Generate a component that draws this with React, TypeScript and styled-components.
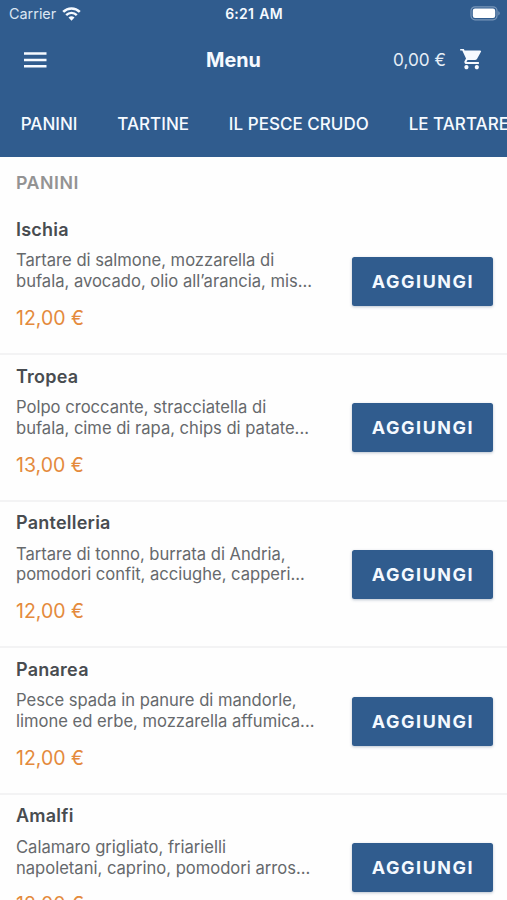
import React from "react";
import styled, { createGlobalStyle } from "styled-components";

const GlobalStyle = createGlobalStyle`
  * { box-sizing: border-box; }
  html, body { margin: 0; padding: 0; overflow: hidden; }
  body { font-family: Inter, "Liberation Sans", sans-serif; background: #fefefe; }
`;

const Screen = styled.main`
  width: 507px;
  height: 900px;
  overflow: hidden;
  display: flex;
  flex-direction: column;
  background: #fefefe;
`;

const Header = styled.header`
  flex: none;
  height: 157px;
  background: #305c8e;
  color: #f6faff;
  display: flex;
  flex-direction: column;
`;

const StatusBar = styled.div`
  height: 27px;
  display: grid;
  grid-template-columns: 1fr auto 1fr;
  align-items: center;
  padding: 0 7px 0 8px;
`;

const Carrier = styled.div`
  display: flex;
  align-items: center;
  gap: 6px;
  padding-left: 1px;
  font-size: 14.4px;
  color: #dbe6f2;
`;

const Clock = styled.div`
  font-size: 14px;
  font-weight: 600;
  letter-spacing: 0.2px;
  word-spacing: 1.6px;
`;

const Battery = styled.div`
  justify-self: end;
  display: flex;
`;

const NavBar = styled.div`
  height: 65px;
  display: grid;
  grid-template-columns: 182px 1fr auto;
  align-items: center;
  padding: 0 25px 0 24px;
`;

const IconButton = styled.button`
  border: 0;
  padding: 0;
  background: none;
  color: inherit;
  display: flex;
`;

const Title = styled.h1`
  margin: 0;
  font-size: 19.8px;
  font-weight: 700;
`;

const Cart = styled.div`
  display: flex;
  align-items: center;
  gap: 14px;
  font-size: 17.2px;
  color: #e6eef7;
`;

const Tabs = styled.nav`
  height: 63px;
  display: flex;
  align-items: center;
  gap: 39.8px;
  padding-left: 20.7px;
  overflow: hidden;
`;

const Tab = styled.a`
  flex: none;
  font-size: 17px;
  font-weight: 500;
  letter-spacing: 0.03px;
  white-space: nowrap;
`;

const SectionTitle = styled.h2`
  flex: none;
  margin: 0;
  height: 51.6px;
  padding: 15px 16px 0;
  font-size: 17.8px;
  line-height: 22px;
  font-weight: 600;
  letter-spacing: 0.5px;
  color: #939393;
`;

const Row = styled.article`
  flex: none;
  height: 146.6px;
  display: flex;
  justify-content: space-between;
  padding: 9.4px 14px 0 16px;
  border-bottom: 2px solid #f3f3f4;
`;

const Info = styled.div`
  white-space: nowrap;
`;

const Name = styled.h3`
  margin: 0;
  font-size: 18px;
  line-height: 24px;
  font-weight: 600;
  letter-spacing: 0.24px;
  color: #484c50;
`;

const Description = styled.p`
  margin: 8.5px 0 0;
  font-size: 16.6px;
  line-height: 20.7px;
  letter-spacing: -0.01px;
  color: #66696c;
`;

const Line = styled.span`
  display: block;
`;

const Price = styled.div`
  margin-top: 14.2px;
  font-size: 19.5px;
  line-height: 24px;
  color: #e48a3c;
`;

const AddButton = styled.button`
  margin-top: 38.8px;
  width: 141px;
  height: 49px;
  padding: 0 0 0 1px;
  border: 0;
  border-radius: 2.5px;
  background: #305c8e;
  color: #f4f9ff;
  font-family: inherit;
  font-size: 17.9px;
  font-weight: 650;
  letter-spacing: 1.6px;
  box-shadow: 0 1px 3px rgba(30, 60, 100, 0.3);
`;

const tabs = ["PANINI", "TARTINE", "IL PESCE CRUDO", "LE TARTARE"];

const items = [
  { name: "Ischia", lines: ["Tartare di salmone, mozzarella di", "bufala, avocado, olio all’arancia, mis..."], price: "12,00 €" },
  { name: "Tropea", lines: ["Polpo croccante, stracciatella di", "bufala, cime di rapa, chips di patate..."], price: "13,00 €" },
  { name: "Pantelleria", lines: ["Tartare di tonno, burrata di Andria,", "pomodori confit, acciughe, capperi..."], price: "12,00 €" },
  { name: "Panarea", lines: ["Pesce spada in panure di mandorle,", "limone ed erbe, mozzarella affumica..."], price: "12,00 €" },
  { name: "Amalfi", lines: ["Calamaro grigliato, friarielli", "napoletani, caprino, pomodori arros..."], price: "12,00 €" },
];

export default function App() {
  return (
    <Screen>
      <GlobalStyle />
      <Header>
        <StatusBar>
          <Carrier>
            <span>Carrier</span>
            <svg width="19" height="14" viewBox="0 0 19 14" fill="none" stroke="#f6faff">
              <path d="M1.2 4.900a11.800 11.800 0 0 1 16.600 0" strokeWidth="2.6" />
              <path d="M4.200 8.100a7.500 7.500 0 0 1 10.600 0" strokeWidth="2.4" />
              <path d="M9.500 13.800 6.500 10.600a4.300 4.300 0 0 1 6 0z" fill="#f6faff" stroke="none" />
            </svg>
          </Carrier>
          <Clock>6:21 AM</Clock>
          <Battery>
            <svg width="30" height="15" viewBox="0 0 30 15">
              <rect x="1" y="0.8" width="26" height="13" rx="4" fill="none" stroke="#7896b9" strokeWidth="1.2" />
              <rect x="2.8" y="2.6" width="22.4" height="9.4" rx="2.2" fill="#fff" />
              <path d="M28.3 5.2C30.2 5.9 30.2 8.700 28.3 9.400Z" fill="#7896b9" />
            </svg>
          </Battery>
        </StatusBar>
        <NavBar>
          <IconButton aria-label="Menu">
            <svg width="23" height="16" viewBox="0 0 23 16" fill="currentColor">
              <path d="M0 0.200h22.500v2.500H0zM0 6.700h22.500v2.500H0zM0 13h22.500v2.500H0z" />
            </svg>
          </IconButton>
          <Title>Menu</Title>
          <Cart>
            <span>0,00 €</span>
            <svg width="22" height="22" viewBox="0.8 2.500 21.200 21.200" fill="#f6faff">
              <path d="M7 18c-1.100 0-1.990.9-1.990 2S5.900 22 7 22s2-.9 2-2-.9-2-2-2zM1 2v2h2l3.600 7.590-1.350 2.450c-.16.280-.25.610-.25.960 0 1.100.9 2 2 2h12v-2H7.420c-.14 0-.25-.11-.25-.25l.03-.12.9-1.630h7.450c.75 0 1.410-.41 1.750-1.030l3.580-6.490A1.003 1.003 0 0 0 20 4H5.210l-.94-2H1zm16 16c-1.100 0-1.990.9-1.990 2s.89 2 1.990 2 2-.9 2-2-.9-2-2-2z" />
            </svg>
          </Cart>
        </NavBar>
        <Tabs>
          {tabs.map((t) => (
            <Tab key={t}>{t}</Tab>
          ))}
        </Tabs>
      </Header>
      <SectionTitle>PANINI</SectionTitle>
      {items.map((item) => (
        <Row key={item.name}>
          <Info>
            <Name>{item.name}</Name>
            <Description>
              {item.lines.map((l) => (
                <Line key={l}>{l}</Line>
              ))}
            </Description>
            <Price>{item.price}</Price>
          </Info>
          <AddButton>AGGIUNGI</AddButton>
        </Row>
      ))}
    </Screen>
  );
}
